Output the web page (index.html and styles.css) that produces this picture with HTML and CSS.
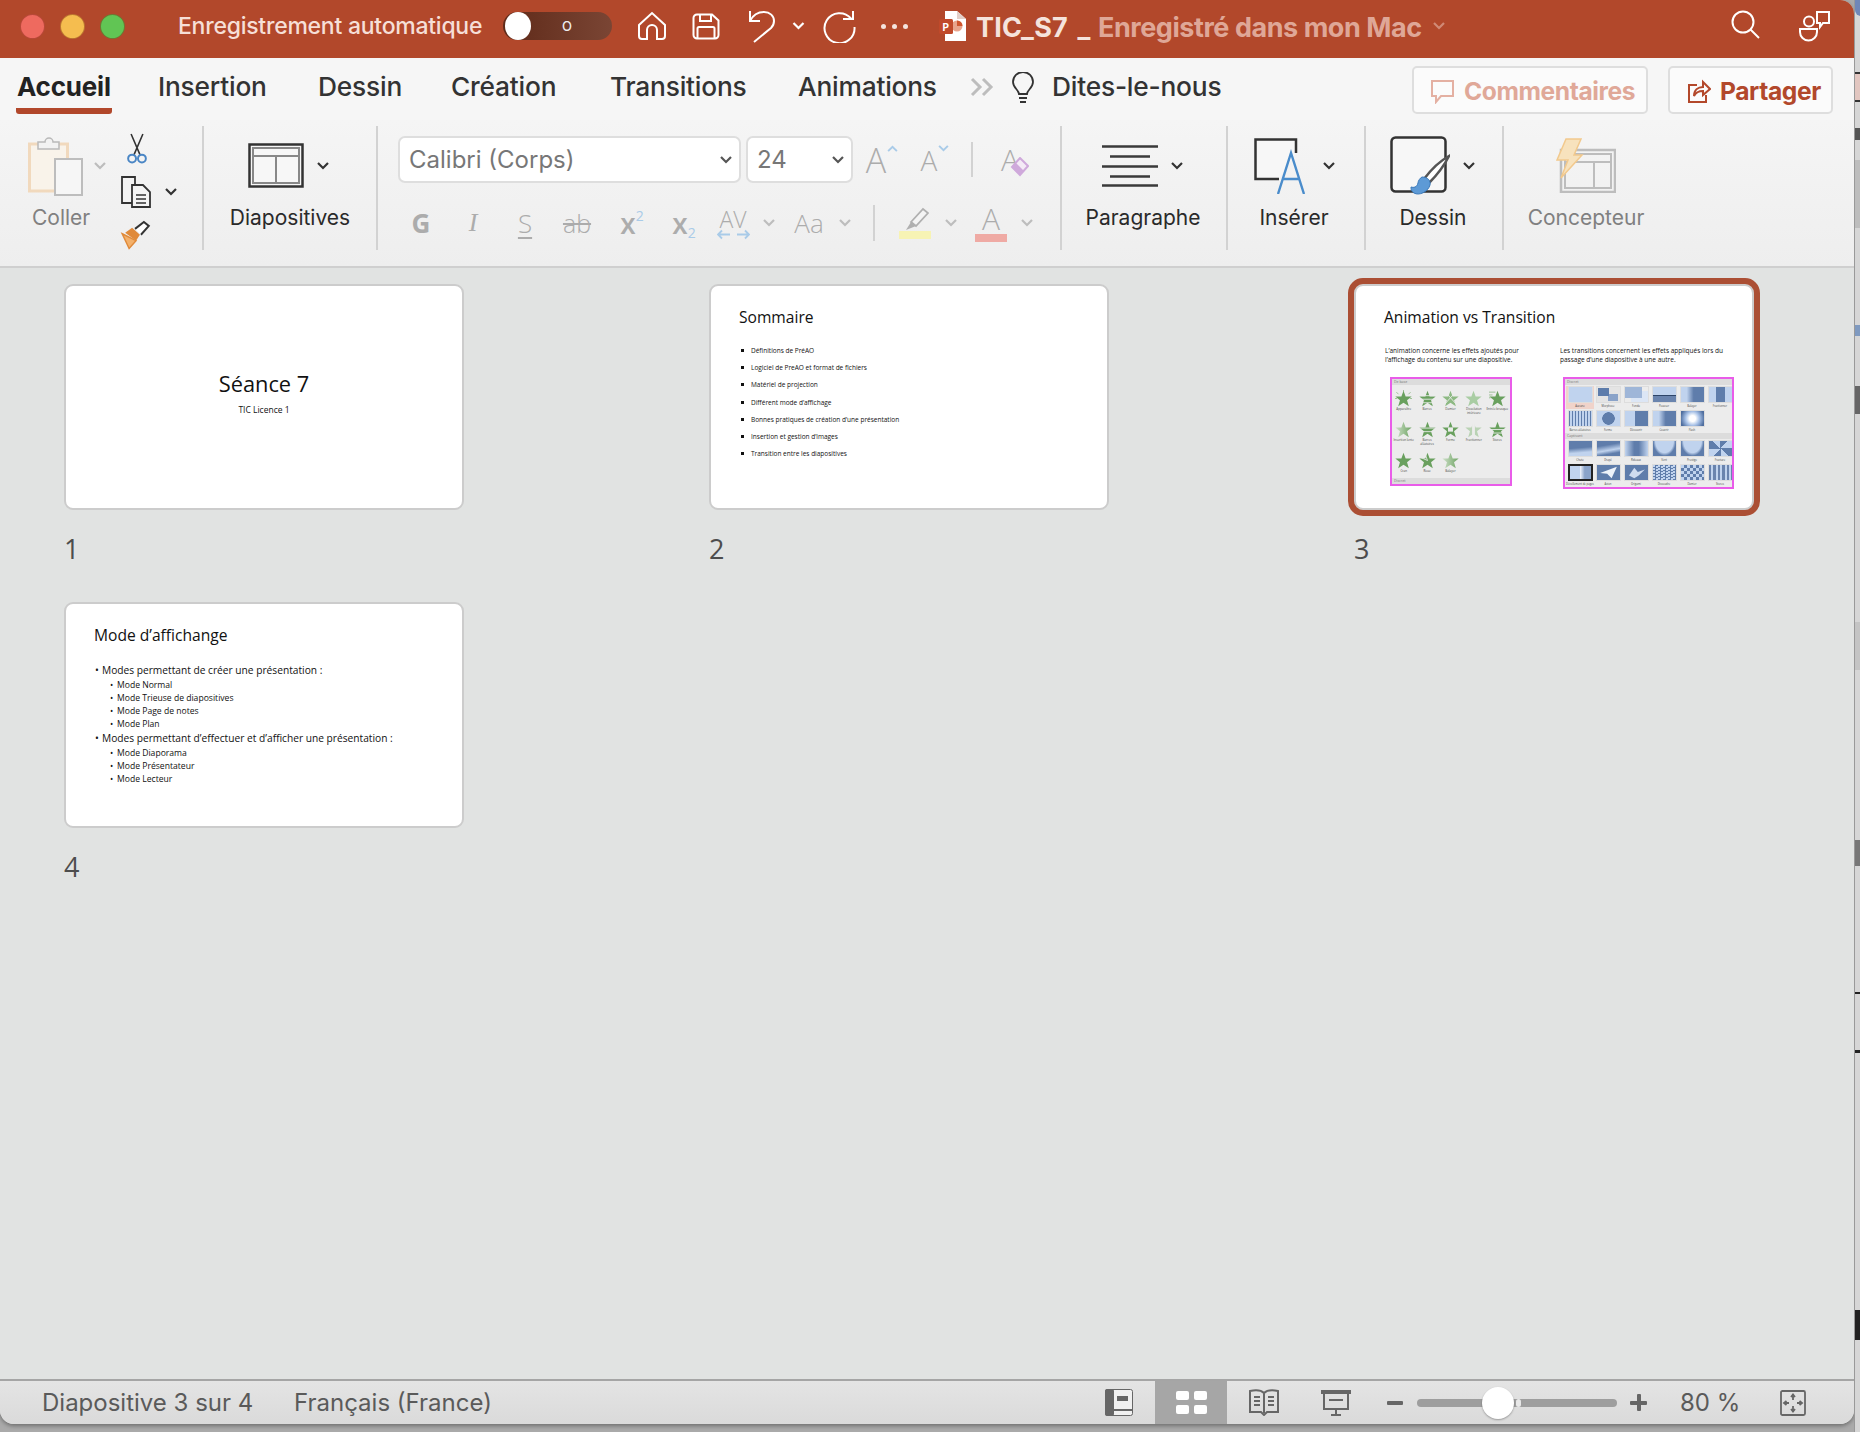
FILE: index.html
```html
<!DOCTYPE html>
<html lang="fr">
<head>
    <meta charset="UTF-8">
    <title>TIC_S7 - PowerPoint</title>
    <link rel="stylesheet" href="styles.css">
</head>
<body>
    <svg class="defs" width="0" height="0">
        <defs>
            <symbol id="star" viewBox="0 0 24 24"><polygon points="12,1 15,9 23.5,9 17,14.5 19.5,23 12,18 4.5,23 7,14.5 0.5,9 9,9"/></symbol>
            <symbol id="chev" viewBox="0 0 12 8"><path d="M1 1l5 5 5-5" fill="none" stroke="currentColor" stroke-width="2.2"/></symbol>
            <linearGradient id="fadeStar" x1="0" x2="1" y1="0" y2="0"><stop offset="0" stop-color="#cfe0ca"/><stop offset="1" stop-color="#6ea463"/></linearGradient>
        </defs>
    </svg>

    <div class="window">
        <!-- barre de titre -->
        <header class="titlebar">
            <span class="light light-red"></span>
            <span class="light light-yellow"></span>
            <span class="light light-green"></span>
            <span class="autosave">Enregistrement automatique</span>
            <span class="switch"><span class="knob"></span><span class="switch-o">O</span></span>

            <svg class="ti ti-home" width="30" height="30" viewBox="0 0 30 30"><path d="M2 14L15 2l13 12v11a3 3 0 0 1-3 3h-5V19a5 5 0 0 0-10 0v9H5a3 3 0 0 1-3-3z"/></svg>
            <svg class="ti ti-save" width="28" height="27" viewBox="0 0 28 27"><path d="M5 1.5h15l6.500 6V22a3.500 3.500 0 0 1-3.500 3.500H5A3.500 3.500 0 0 1 1.500 22V5A3.500 3.500 0 0 1 5 1.500zM8 1.500v6.500h11V1.500M5.500 25.500V15.500a1.500 1.500 0 0 1 1.500-1.500h14a1.500 1.500 0 0 1 1.500 1.500v10"/></svg>
            <svg class="ti ti-undo" width="28" height="33" viewBox="0 0 28 33"><path d="M2 1v10h10M2 11c3-6 8-9 14-9 6 0 10 4 10 9 0 3-1 5-3 7L6 32"/></svg>
            <svg class="ti-chev ti-chev-undo" width="13" height="8"><use href="#chev"/></svg>
            <svg class="ti ti-redo" width="33" height="33" viewBox="0 0 33 33"><path d="M28 8.500A15 15 0 1 0 31.500 17M30 1v8h-10"/></svg>
            <span class="ti-dots"><i></i><i></i><i></i></span>

            <svg class="ppt-icon" width="27" height="30" viewBox="0 0 27 30"><path d="M6 0h12l9 8v22H6z" fill="#fff"/><path d="M18 0l9 8h-9z" fill="#e3cfc8"/><circle cx="18" cy="15" r="5.500" fill="#e8a48c"/><path d="M18 15V9.500a5.500 5.500 0 0 1 5.500 5.500z" fill="#d0562f"/><rect x="0" y="8" width="14" height="15" rx="1.500" fill="#c0492a"/><text x="3.500" y="19.500" class="ppt-p">P</text></svg>
            <span class="doc-name">TIC_S7 _</span>
            <span class="doc-state">Enregistré dans mon Mac</span>
            <svg class="doc-chev" width="14" height="8"><use href="#chev"/></svg>

            <span class="titlebar-right">
                <svg class="ti" width="29" height="29" viewBox="0 0 29 29"><circle cx="12" cy="12" r="10.500"/><path d="M19.500 19.500L28 28"/></svg>
                <svg class="ti ti-people" width="33" height="32" viewBox="0 0 33 32"><circle cx="11" cy="11.500" r="5"/><path d="M2 19h17v3a8.500 8.500 0 0 1-17 0z"/><path d="M19 2h12v11h-6l-3 4v-4h-3z"/></svg>
            </span>
        </header>

        <!-- onglets -->
        <nav class="tabs">
            <div class="tab active"><span>Accueil</span></div>
            <div class="tab"><span>Insertion</span></div>
            <div class="tab"><span>Dessin</span></div>
            <div class="tab"><span>Création</span></div>
            <div class="tab"><span>Transitions</span></div>
            <div class="tab"><span>Animations</span></div>
            <div class="tab-more tab-chevrons">
                <svg width="25" height="20" viewBox="0 0 25 20"><path d="M2 2l8 8-8 8M13 2l8 8-8 8" fill="none" stroke="#bdbdbd" stroke-width="3"/></svg>
            </div>
            <div class="tab-more">
                <svg width="24" height="31" viewBox="0 0 24 31" fill="none" stroke="#333" stroke-width="1.800"><path d="M8 22c0-4-6-6-6-12a10 10 0 0 1 20 0c0 6-6 8-6 12z"/><path d="M8 26h8M9 30h6"/></svg>
            </div>
            <div class="tab"><span>Dites-le-nous</span></div>
            <div class="actions">
                <button class="act act-comment">
                    <svg width="25" height="25" viewBox="0 0 25 25" fill="none" stroke="#e4b0a2" stroke-width="2"><path d="M2 2h21v15H11l-5 6v-6H2z"/></svg>
                    Commentaires
                </button>
                <button class="act act-share">
                    <svg width="24" height="25" viewBox="0 0 24 25" fill="none" stroke="#b3482b" stroke-width="2"><path d="M10 6H2v17h17v-7"/><path d="M7 17c0-6 4-9 9-9V3l7 7-7 6v-4c-4 0-7 1-9 5z"/></svg>
                    Partager
                </button>
            </div>
        </nav>

        <!-- ruban -->
        <section class="ribbon">
            <div class="group group-coller">
                <div class="coller-main">
                    <div class="coller-top">
                        <svg width="56" height="62" viewBox="0 0 56 62"><rect x="1.500" y="9" width="38" height="47" fill="#f9f3ea" stroke="#f1d9bd" stroke-width="3"/><path d="M10 14V7h7a4 4 0 0 1 8 0h6v7z" fill="#f2f2f2" stroke="#b9b9b9" stroke-width="1.500"/><rect x="27" y="24" width="27" height="36" fill="#f6f6f6" stroke="#bdbdbd" stroke-width="2"/></svg>
                        <svg class="chev-light" width="12" height="8"><use href="#chev"/></svg>
                    </div>
                    <div class="glabel muted">Coller</div>
                </div>
                <div class="coller-side">
                    <svg width="22" height="32" viewBox="0 0 22 32" fill="none"><path d="M5 1l9 21M17 1L8 22" stroke="#333" stroke-width="1.600"/><circle cx="6" cy="26" r="4" stroke="#4a86c5" stroke-width="2"/><circle cx="16" cy="26" r="4" stroke="#4a86c5" stroke-width="2"/></svg>
                    <div class="copy-row">
                        <svg width="32" height="32" viewBox="0 0 32 32" fill="#f4f4f4" stroke="#333" stroke-width="1.800"><path d="M12 27H2V1h13v8"/><path d="M12 9h11l7 7v15H12z"/><path d="M16 19h10M16 23h10M16 27h10" stroke-width="1.300"/></svg>
                        <svg class="chev-dark" width="12" height="8"><use href="#chev"/></svg>
                    </div>
                    <svg width="33" height="30" viewBox="0 0 33 30"><path d="M2 14l14 7-7 8z" fill="#f3b06a" stroke="#e08a3a" stroke-width="1.500"/><path d="M5 13l7-5 8 7-4 6z" fill="#e08a3a"/><path d="M15 9l9-7 5 4-8 9" fill="#fff" stroke="#333" stroke-width="2"/></svg>
                </div>
            </div>

            <div class="group big">
                <div class="big-top">
                    <svg width="56" height="45" viewBox="0 0 56 45" fill="#f7f7f7"><rect x="1.500" y="1.500" width="53" height="42" stroke="#333" stroke-width="2.500"/><rect x="5" y="5" width="46" height="35" stroke="#888" stroke-width="2"/><path d="M5 13h46M28 13v27" stroke="#888" stroke-width="2"/></svg>
                    <svg class="chev-dark" width="12" height="8"><use href="#chev"/></svg>
                </div>
                <div class="glabel">Diapositives</div>
            </div>

            <div class="group group-font">
                <div class="font-row1">
                    <div class="select"><span>Calibri (Corps)</span><svg width="12" height="8"><use href="#chev"/></svg></div>
                    <div class="select"><span>24</span><svg width="12" height="8"><use href="#chev"/></svg></div>
                    <div class="fcell fa-big">A<svg class="fa-hat" width="11" height="7"><use href="#chev" transform="rotate(180 5.500 3.500)"/></svg></div>
                    <div class="fcell fa-small">A<svg class="fa-hat" width="11" height="7"><use href="#chev"/></svg></div>
                    <div class="fcell"><i class="vsep"></i></div>
                    <div class="fcell fa-clear">A
                        <svg width="20" height="20" viewBox="0 0 20 20"><path d="M11 1l8 8-8 9-8-8z" fill="#f4eaf6" stroke="#cfa9db" stroke-width="2"/><path d="M7 6l8 8-4 4-8-8z" fill="#cfa9db"/></svg>
                    </div>
                </div>
                <div class="font-row2">
                    <div class="fcell f-g">G</div>
                    <div class="fcell f-i">I</div>
                    <div class="fcell f-s">S</div>
                    <div class="fcell f-ab">ab</div>
                    <div class="fcell f-x">x<sup>2</sup></div>
                    <div class="fcell f-x">x<sub>2</sub></div>
                    <div class="fcell f-av">AV
                        <svg width="33" height="11" viewBox="0 0 33 11" fill="none" stroke="#a9cbe8" stroke-width="1.800"><path d="M1 5.500h12M5 1.500l-4 4 4 4M20 5.500h12M28 1.500l4 4-4 4"/></svg>
                    </div>
                    <div class="fcell"><svg class="chev-light" width="12" height="8"><use href="#chev"/></svg></div>
                    <div class="fcell f-aa">Aa</div>
                    <div class="fcell"><svg class="chev-light" width="12" height="8"><use href="#chev"/></svg></div>
                    <div class="fcell"><i class="vsep vsep-tall"></i></div>
                    <div class="fcell f-mark">
                        <svg width="28" height="24" viewBox="0 0 28 24"><path d="M10 15L22 2l5 4-12 13z" fill="#f4f4f4" stroke="#b0b0b0" stroke-width="1.800"/><path d="M5 23l5-8 5 4z" fill="#b0b0b0"/></svg>
                        <i class="swatch swatch-yellow"></i>
                    </div>
                    <div class="fcell"><svg class="chev-light" width="12" height="8"><use href="#chev"/></svg></div>
                    <div class="fcell f-mark f-color">A<i class="swatch swatch-red"></i></div>
                    <div class="fcell"><svg class="chev-light" width="12" height="8"><use href="#chev"/></svg></div>
                </div>
            </div>

            <div class="group big group-para">
                <div class="big-top">
                    <svg width="56" height="42" viewBox="0 0 56 42" stroke="#3a3a3a" stroke-width="2.400"><path d="M0 1.500h56M8 11.500h40M0 21.500h56M8 31.500h40M0 40.500h56"/></svg>
                    <svg class="chev-dark" width="12" height="8"><use href="#chev"/></svg>
                </div>
                <div class="glabel">Paragraphe</div>
            </div>

            <div class="group big group-ins">
                <div class="big-top">
                    <svg width="56" height="56" viewBox="0 0 56 56" fill="none"><path d="M25 41H1.500V1.500H42V15" fill="#f7f7f7" stroke="#333" stroke-width="2.500"/><path d="M24 56L37 15l13 41M29 41h17" stroke="#4a8ccb" stroke-width="2.400" fill="none"/></svg>
                    <svg class="chev-dark" width="12" height="8"><use href="#chev"/></svg>
                </div>
                <div class="glabel">Insérer</div>
            </div>

            <div class="group big group-draw">
                <div class="big-top">
                    <svg width="60" height="60" viewBox="0 0 60 60"><rect x="1.500" y="1.500" width="54" height="54" rx="4" fill="#f7f7f7" stroke="#333" stroke-width="2.500"/><path d="M59 20C54 30 46 40 39 47l-5-4C40 35 50 25 59 20z" fill="#fff" stroke="#555" stroke-width="2.500"/><path d="M32 41c6 0 9 4 8 8-2 7-11 11-16 8-3-2-3-4-3-6 3 1 6 0 7-4 0-2 2-5 4-6z" fill="#5d9ad6" stroke="#3a78b8"/></svg>
                    <svg class="chev-dark" width="12" height="8"><use href="#chev"/></svg>
                </div>
                <div class="glabel">Dessin</div>
            </div>

            <div class="group big group-design">
                <div class="big-top">
                    <svg width="60" height="55" viewBox="0 0 60 55" fill="none"><rect x="5" y="12" width="54" height="42" stroke="#bdbdbd" stroke-width="2.500"/><rect x="9" y="16" width="46" height="34" stroke="#bdbdbd" stroke-width="2"/><path d="M9 24h46M38 24v26" stroke="#bdbdbd" stroke-width="2"/><path d="M10 1h15l-7 16h8L5 40l7-18H1z" fill="#f7e2bd" stroke="#f2c98d" stroke-width="1.500"/></svg>
                </div>
                <div class="glabel muted">Concepteur</div>
            </div>
        </section>

        <!-- trieuse de diapositives -->
        <main class="sorter">
            <div class="slide-item">
                <div class="slide slide-title">
                    <div class="s1-title">Séance 7</div>
                    <div class="s1-sub">TIC Licence 1</div>
                </div>
                <div class="slide-num">1</div>
            </div>

            <div class="slide-item">
                <div class="slide slide-list">
                    <div class="s-title">Sommaire</div>
                    <ul class="s2-list">
                        <li>Définitions de PréAO</li>
                        <li>Logiciel de PreAO et format de fichiers</li>
                        <li>Matériel de projection</li>
                        <li>Différent mode d’affichage</li>
                        <li>Bonnes pratiques de création d’une présentation</li>
                        <li>Insertion et gestion d’images</li>
                        <li>Transition entre les diapositives</li>
                    </ul>
                </div>
                <div class="slide-num">2</div>
            </div>

            <div class="slide-item">
                <div class="slide slide-list selected">
                    <div class="s-title">Animation vs Transition</div>
                    <div class="s3-cols">
                        <div class="s3-col">
                            <p class="s3-text s3-text-left">L’animation concerne les effets ajoutés pour l’affichage du contenu sur une diapositive.</p>
                            <div class="shot shot-anim">
                                <div class="shot-band">De base</div>
                                <div class="anim-grid">
                                    <div class="anim"><svg class="star" viewBox="0 0 24 24"><use href="#star" width="24" height="24"/><path class="star-rays" d="M12 0v3M2 3l3 3M22 3l-3 3M0 12h3M24 12h-3"/></svg>Apparaître</div>
                                    <div class="anim"><svg class="star" viewBox="0 0 24 24"><use href="#star" width="24" height="24"/><path class="star-cut" d="M0 8h24M0 13h24M0 18h24"/></svg>Barres</div>
                                    <div class="anim"><svg class="star star-check" viewBox="0 0 24 24"><use href="#star" width="24" height="24"/><path class="star-cut" d="M6 4l14 16M18 4L4 20"/></svg>Damier</div>
                                    <div class="anim"><svg class="star star-pale" viewBox="0 0 24 24"><use href="#star" width="24" height="24"/></svg>Dissolution intérieure</div>
                                    <div class="anim"><svg class="star" viewBox="0 0 24 24"><use href="#star" width="24" height="24"/><path class="star-trail" d="M0 3h9M0 7h5M0 11h2"/></svg>Entrée brusque</div>
                                    <div class="anim"><svg class="star star-fade" viewBox="0 0 24 24"><use href="#star" width="24" height="24"/></svg>Insertion lente</div>
                                    <div class="anim"><svg class="star" viewBox="0 0 24 24"><use href="#star" width="24" height="24"/><path class="star-cut" d="M0 10h24M0 15h24"/></svg>Barres aléatoires</div>
                                    <div class="anim"><svg class="star" viewBox="0 0 24 24"><use href="#star" width="24" height="24"/><rect x="8.500" y="9" width="7" height="6" fill="#ececec"/></svg>Forme</div>
                                    <div class="anim"><svg class="star star-split" viewBox="0 0 24 24"><use href="#star" width="24" height="24"/><rect x="10" y="0" width="4" height="24" fill="#ececec"/></svg>Fractionner</div>
                                    <div class="anim"><svg class="star" viewBox="0 0 24 24"><use href="#star" width="24" height="24"/><path class="star-cut" d="M0 12h24M0 17h24"/></svg>Stores</div>
                                    <div class="anim"><svg class="star" viewBox="0 0 24 24"><use href="#star" width="24" height="24"/></svg>Cran</div>
                                    <div class="anim"><svg class="star" viewBox="0 0 24 24"><use href="#star" width="24" height="24"/><path class="star-cut" d="M12 12L8 1M12 12L3 8"/></svg>Roue</div>
                                    <div class="anim"><svg class="star star-fade" viewBox="0 0 24 24"><use href="#star" width="24" height="24"/></svg>Balayer</div>
                                </div>
                                <div class="shot-band shot-band-end">Discret</div>
                            </div>
                        </div>
                        <div class="s3-col">
                            <p class="s3-text">Les transitions concernent les effets appliqués lors du passage d’une diapositive à une autre.</p>
                            <div class="shot shot-trans">
                                <div class="shot-band">Discret</div>
                                <div class="trans-grid">
                                    <div class="trans chosen"><i class="tile"></i>Aucune</div>
                                    <div class="trans"><i class="tile t-morph"></i>Morphose</div>
                                    <div class="trans"><i class="tile t-fade"></i>Fondu</div>
                                    <div class="trans"><i class="tile t-push"></i>Pousser</div>
                                    <div class="trans"><i class="tile t-wipe"></i>Balayer</div>
                                    <div class="trans"><i class="tile t-split"></i>Fractionner</div>
                                    <div class="trans"><i class="tile t-stripes"></i>Barres aléatoires</div>
                                    <div class="trans"><i class="tile t-circle"></i>Forme</div>
                                    <div class="trans"><i class="tile t-reveal"></i>Découvrir</div>
                                    <div class="trans"><i class="tile t-wipe"></i>Couvrir</div>
                                    <div class="trans"><i class="tile t-flash"></i>Flash</div>
                                </div>
                                <div class="shot-band shot-band-mid">Captivant</div>
                                <div class="trans-grid">
                                    <div class="trans"><i class="tile t-fall"></i>Chute</div>
                                    <div class="trans"><i class="tile t-drape"></i>Drapé</div>
                                    <div class="trans"><i class="tile t-curtain"></i>Rideaux</div>
                                    <div class="trans"><i class="tile t-wind"></i>Vent</div>
                                    <div class="trans"><i class="tile t-wind"></i>Prestige</div>
                                    <div class="trans"><i class="tile t-shatter"></i>Fracture</div>
                                    <div class="trans"><i class="tile t-page"></i>Décollement de pages</div>
                                    <div class="trans"><i class="tile t-dark"><svg viewBox="0 0 25 17"><polygon points="3,9 22,2 16,15 11,10" fill="#eef3fa"/></svg></i>Avion</div>
                                    <div class="trans"><i class="tile t-dark"><svg viewBox="0 0 25 17"><polygon points="4,12 10,3 14,8 22,5 15,12 10,15" fill="#cfdcf0"/></svg></i>Origami</div>
                                    <div class="trans"><i class="tile t-dots"></i>Dissoudre</div>
                                    <div class="trans"><i class="tile t-checker"></i>Damier</div>
                                    <div class="trans"><i class="tile t-stripes2"></i>Stores</div>
                                </div>
                            </div>
                        </div>
                    </div>
                </div>
                <div class="slide-num">3</div>
            </div>

            <div class="slide-item">
                <div class="slide slide-list">
                    <div class="s-title">Mode d’affichange</div>
                    <ul class="s4-list">
                        <li class="lvl1">Modes permettant de créer une présentation :</li>
                        <li>Mode Normal</li>
                        <li>Mode Trieuse de diapositives</li>
                        <li>Mode Page de notes</li>
                        <li>Mode Plan</li>
                        <li class="lvl1">Modes permettant d’effectuer et d’afficher une présentation :</li>
                        <li>Mode Diaporama</li>
                        <li>Mode Présentateur</li>
                        <li>Mode Lecteur</li>
                    </ul>
                </div>
                <div class="slide-num">4</div>
            </div>
        </main>

        <!-- barre d'etat -->
        <footer class="statusbar">
            <span class="st-slide">Diapositive 3 sur 4</span>
            <span class="st-lang">Français (France)</span>
            <div class="st-right">
                <svg class="sv sv-normal" width="28" height="27" viewBox="0 0 28 27"><rect x="0.500" y="0.500" width="27" height="26" rx="2" fill="#f0f0f0" stroke="#666"/><rect x="0" y="0" width="9" height="27" rx="2" fill="#666"/><rect x="0" y="20" width="28" height="2" fill="#666"/><rect x="12" y="7" width="11" height="5" fill="#666"/></svg>
                <div class="sv-active"><i></i><i></i><i></i><i></i></div>
                <svg class="sv sv-read" width="30" height="27" viewBox="0 0 30 27" fill="none" stroke="#666" stroke-width="2"><path d="M15 4C12 1 6 1 1 2v21h11l3 3 3-3h11V2c-5-1-11-1-14 2zM15 4v20"/><path d="M5 8h6M5 12h6M5 16h6M19 8h6M19 12h6M19 16h6"/></svg>
                <svg class="sv sv-show" width="30" height="26" viewBox="0 0 30 26" fill="none" stroke="#666" stroke-width="2"><path d="M0 2h30" stroke-width="4"/><path d="M3 3v16h24V3M8 10h14M15 19v6M10 25h10"/></svg>
                <span class="zoom-minus"></span>
                <div class="slider"><span class="slider-knob"></span><span class="slider-tick"></span></div>
                <span class="zoom-plus"></span>
                <span class="zoom-val">80 %</span>
                <svg class="sv sv-fit" width="26" height="26" viewBox="0 0 26 26" fill="none" stroke="#666" stroke-width="1.800"><rect x="1" y="1" width="24" height="24" rx="1.500"/><path d="M13 5v5M11 7l2-2.500L15 7M13 21v-5M11 19l2 2.500 2-2.500M4 13h5M6.500 11L4 13l2.500 2M22 13h-5M19.500 11L22 13l-2.500 2"/></svg>
            </div>
        </footer>
    </div>

    <!-- ce qui depasse derriere la fenetre -->
    <div class="backdrop">
        <i class="bd bd-blue"></i><i class="bd bd-line1"></i><i class="bd bd-line2"></i>
        <i class="bd bd-red"></i><i class="bd bd-e"></i><i class="bd bd-band"></i><i class="bd bd-blue2"></i>
        <i class="bd bd-s"></i><i class="bd bd-band2"></i><i class="bd bd-n"></i>
        <i class="bd bd-k1"></i><i class="bd bd-k2"></i><i class="bd bd-f"></i>
    </div>
</body>
</html>
```

FILE: styles.css
```css
* {
    box-sizing: border-box;
}

html, body {
    margin: 0;
    padding: 0;
}

body {
    width: 1860px;
    height: 1432px;
    overflow: hidden;
    display: flex;
    background-color: #aaa;
    font-family: Inter, "Liberation Sans", sans-serif;
    color: #222;
}

.defs {
    position: absolute;
}

.window {
    width: 1854px;
    height: 1424px;
    display: flex;
    flex-direction: column;
    background-color: #e1e3e2;
    border-radius: 0 14px 14px 14px;
    overflow: hidden;
    box-shadow: 0 2px 4px rgba(0, 0, 0, 0.35);
}

/* title bar */
.titlebar {
    height: 58px;
    flex: none;
    display: flex;
    align-items: center;
    background-color: #b2482b;
    color: #fff;
    padding-left: 20px;
}

.light {
    width: 25px;
    height: 25px;
    border-radius: 50%;
    margin-right: 15px;
    margin-top: -6px;
    border: 1px solid rgba(120, 30, 10, 0.45);
}

.light-red { background-color: #ee6a5f; }
.light-yellow { background-color: #f5bd4f; }
.light-green { background-color: #61c554; }

.autosave {
    width: 305px;
    margin-left: 38px;
    margin-top: -6px;
    font-size: 23px;
    font-weight: 500;
    letter-spacing: -0.25px;
    white-space: nowrap;
    color: #f6dfd7;
}

.switch {
    width: 109px;
    height: 28px;
    margin-left: 20px;
    margin-top: -6px;
    border-radius: 14px;
    background: linear-gradient(90deg, #5f2a19, #7a4534);
    display: flex;
    align-items: center;
    position: relative;
}

.knob {
    width: 26px;
    height: 28px;
    margin-left: 2px;
    border-radius: 50%;
    background-color: #fff;
}

.switch-o {
    margin-left: 31px;
    font-size: 13px;
    font-weight: 500;
    color: #eee;
}

.ti {
    flex: none;
    margin-top: -6px;
    fill: none;
    stroke: #fff;
    stroke-width: 2;
}

.ti-home { margin-left: 25px; }
.ti-save { margin-left: 25px; }
.ti-undo { margin-left: 28px; }
.ti-redo { margin-left: 18px; }

.ti-chev {
    margin-top: -6px;
    color: #fff;
}

.ti-chev-undo { margin-left: 16px; }

.ti-dots {
    display: flex;
    gap: 6px;
    margin-left: 25px;
    margin-top: -6px;
}

.ti-dots i {
    width: 5px;
    height: 5px;
    border-radius: 50%;
    background-color: #f4e3dd;
}

.ppt-icon {
    margin-left: 31px;
    margin-top: -6px;
}

.ppt-p {
    font-size: 10px;
    font-weight: 700;
    fill: #fff;
}

.doc-name,
.doc-state {
    font-size: 27px;
    font-weight: 700;
    white-space: pre;
    margin-top: -4px;
}

.doc-name {
    width: 122px;
    margin-left: 10px;
    letter-spacing: 0.2px;
    word-spacing: 3px;
    color: #f5e3dc;
}

.doc-state {
    width: 325px;
    letter-spacing: -0.45px;
    color: #dfa797;
}

.doc-chev {
    margin-left: 9px;
    margin-top: -6px;
    color: #d08a76;
}

.titlebar-right {
    margin-left: auto;
    padding-right: 23px;
    display: flex;
    gap: 38px;
}

/* tabs */
.tabs {
    height: 62px;
    flex: none;
    display: grid;
    grid-template-columns: 141px 160px 133px 159px 188px 172px 41px 41px 190px 1fr;
    padding-left: 17px;
    background-color: #f6f6f6;
}

.tab {
    padding-top: 12px;
    font-size: 26.300px;
    line-height: 34px;
    letter-spacing: -0.2px;
    white-space: nowrap;
    color: #333;
    font-weight: 500;
}

.tab span {
    display: inline-block;
}

.tab.active {
    font-size: 26px;
    font-weight: 700;
    color: #222;
}

.tab.active span {
    padding: 0 1px 4px;
    margin-left: -1px;
    border-bottom: 6px solid #b2482b;
    border-radius: 0 0 3px 3px;
}

.tab-more {
    padding-top: 14px;
}

.tab-chevrons {
    padding-top: 19px;
}

.actions {
    display: flex;
    justify-content: flex-end;
    gap: 20px;
    padding: 8px 21px 0 0;
}

.act {
    height: 48px;
    display: flex;
    align-items: center;
    gap: 9px;
    border: 2px solid #dedede;
    border-radius: 5px;
    background-color: #fbfbfb;
    font-family: inherit;
    font-size: 24.600px;
    font-weight: 700;
    letter-spacing: -0.4px;
    white-space: nowrap;
}

.act-comment {
    width: 236px;
    padding: 2px 0 0 16px;
    color: #e0a898;
}

.act-share {
    width: 165px;
    padding: 2px 0 0 17px;
    color: #b2482b;
}

/* ribbon */
.ribbon {
    height: 148px;
    flex: none;
    display: flex;
    padding-top: 6px;
    background: linear-gradient(#f5f5f5, #eeeeee);
    border-bottom: 2px solid #cfcfcf;
}

.group {
    height: 124px;
    border-right: 2px solid #d2d2d2;
}

.glabel {
    height: 26px;
    font-size: 21px;
    line-height: 26px;
    text-align: center;
    white-space: nowrap;
    color: #2a2a2a;
}

.muted {
    color: #808080;
}

.big {
    display: flex;
    flex-direction: column;
    align-items: center;
}

.big:nth-child(2) { width: 174px; }
.group-para { width: 166px; }
.group-ins { width: 138px; }
.group-draw { width: 138px; }
.group-design { width: 164px; border-right: none; }

.group-para .glabel,
.group-draw .glabel {
    margin-right: 2px;
}

.group-ins .glabel {
    margin-right: 4px;
}

.big-top {
    height: 79px;
    display: flex;
    align-items: center;
    gap: 13px;
    padding-right: 4px;
}

.group-design .big-top {
    padding-right: 0;
}

.chev-dark { color: #333; }
.chev-light { color: #bdbdbd; }

.group-coller {
    width: 204px;
    display: flex;
}

.coller-main {
    width: 118px;
    padding-left: 28px;
}

.coller-top {
    height: 79px;
    display: flex;
    align-items: center;
    gap: 10px;
}

.coller-main .glabel {
    width: 66px;
    text-align: left;
    margin-left: 4px;
}

.coller-side {
    margin-left: 2px;
    padding-top: 7px;
    display: flex;
    flex-direction: column;
    gap: 12px;
}

.coller-side > svg:first-child {
    margin-left: 6px;
}

.copy-row {
    display: flex;
    align-items: center;
    gap: 13px;
    margin-top: 0;
}

.group-font {
    width: 684px;
    padding-top: 10px;
}

.font-row1 {
    height: 47px;
    display: grid;
    grid-template-columns: 343px 112px 58px 48px 25px 52px;
    column-gap: 0;
    margin-left: 20px;
}

.font-row2 {
    height: 40px;
    margin-top: 20px;
    margin-left: 17px;
    display: grid;
    grid-template-columns: 52px 52px 52px 52px 58px 46px 52px 20px 60px 12px 46px 36px 36px 44px 28px;
}

.select {
    display: flex;
    align-items: center;
    justify-content: space-between;
    padding: 0 7px 0 9px;
    background-color: #fff;
    border: 2px solid #dedede;
    border-radius: 7px;
    font-size: 24px;
    color: #777;
}

.select + .select {
    margin-left: 5px;
}

.select svg {
    color: #555;
}

.fcell {
    display: flex;
    align-items: center;
    justify-content: center;
    position: relative;
    color: #acacac;
    font-family: "Open Sans", sans-serif;
}

.fa-big { font-size: 34px; font-weight: 300; }
.fa-small { font-size: 28px; font-weight: 300; }
.fa-clear { font-size: 30px; font-weight: 300; }

.fa-hat {
    align-self: flex-start;
    margin: 9px 0 0 1px;
    color: #a9cbe8;
}

.fa-clear svg {
    position: absolute;
    left: 25px;
    top: 21px;
}

.vsep {
    display: block;
    width: 2px;
    height: 35px;
    background-color: #d2d2d2;
}

.vsep-tall {
    height: 36px;
}

.f-g { font-size: 26px; font-weight: 700; }
.f-i { font-size: 26px; font-style: italic; font-family: "Liberation Serif", serif; }
.f-s { font-size: 26px; text-decoration: underline; text-underline-offset: 4px; font-weight: 300; }
.f-ab { font-size: 25px; text-decoration: line-through; font-weight: 300; }
.f-x { font-size: 28px; font-weight: 600; }
.f-aa { font-size: 26px; font-weight: 300; }

.f-x sup,
.f-x sub {
    font-size: 14px;
    color: #a9cbe8;
    font-weight: 400;
}

.f-x sup { margin-bottom: 16px; }
.f-x sub { margin-top: 18px; }

.f-av {
    flex-direction: column;
    font-size: 23px;
    font-weight: 300;
    line-height: 24px;
}

.f-av svg {
    margin-top: -2px;
}

.f-mark {
    flex-direction: column;
}

.f-color {
    font-size: 30px;
    font-weight: 300;
    line-height: 30px;
}

.swatch {
    display: block;
    width: 32px;
    height: 8px;
}

.swatch-yellow { background-color: #f7f3b4; }
.swatch-red { background-color: #efaaa4; }

/* slides */
.sorter {
    flex: 1;
    display: grid;
    grid-template-columns: repeat(3, 400px);
    column-gap: 245px;
    row-gap: 39px;
    align-content: start;
    padding: 16px 0 0 64px;
    font-family: "Open Sans", sans-serif;
}

.slide-item {
    height: 279px;
}

.slide {
    width: 400px;
    height: 226px;
    background-color: #fff;
    border: 2px solid #ccc;
    border-radius: 9px;
    color: #111;
    overflow: hidden;
}

.slide.selected {
    outline: 6px solid #ab4f34;
    overflow: visible;
}

.slide-num {
    margin-top: 24px;
    font-size: 27px;
    line-height: 30px;
    color: #4d4d4d;
}

.slide-title {
    display: flex;
    flex-direction: column;
    align-items: center;
    padding-top: 82px;
}

.s1-title {
    font-size: 21.800px;
    line-height: 32px;
}

.s1-sub {
    font-size: 8.500px;
    line-height: 14px;
    margin-top: 3px;
}

.slide-list {
    padding: 20px 0 0 28px;
}

.s-title {
    font-size: 15.600px;
    line-height: 22px;
}

.s2-list,
.s4-list {
    list-style: none;
    margin: 0;
    padding: 0;
}

.s2-list {
    margin-top: 14px;
}

.s2-list li {
    display: flex;
    height: 17.200px;
    align-items: center;
    font-size: 6.500px;
}

.s2-list li::before {
    content: "";
    width: 3px;
    height: 3px;
    margin-left: 2px;
    margin-right: 7px;
    background-color: #111;
}

.s4-list {
    margin-top: 16px;
}

.s4-list li {
    display: flex;
    align-items: center;
    height: 13.100px;
    padding-left: 16px;
    font-size: 8.600px;
}

.s4-list li::before {
    content: "•";
    width: 7px;
}

.s4-list li.lvl1 {
    height: 16px;
    padding-left: 1px;
    font-size: 10.200px;
}

.s4-list li.lvl1::before {
    width: 7px;
}

.s3-cols {
    display: flex;
    margin-top: 18px;
    margin-left: 1px;
}

.s3-col {
    width: 175px;
}

.s3-text {
    margin: 0;
    width: 168px;
    font-size: 6.500px;
    line-height: 9px;
    height: 31px;
}

.s3-text-left {
    width: 142px;
}

.shot {
    border: 2px solid #e95ce9;
    background-color: #ececec;
    font-size: 3px;
    color: #444;
    overflow: hidden;
}

.shot-anim {
    width: 122px;
    height: 109px;
    margin-left: 5px;
    display: flex;
    flex-direction: column;
}

.shot-trans {
    width: 171px;
    height: 112px;
    margin-left: 3px;
}

.shot-band {
    height: 6px;
    flex: none;
    line-height: 6px;
    padding-left: 2px;
    background-color: #dcdcdc;
    color: #777;
    font-size: 3.500px;
}

.shot-band-end {
    margin-top: auto;
}

.anim-grid {
    display: grid;
    grid-template-columns: repeat(5, 23.400px);
    grid-template-rows: 31px 31px 24px;
    padding-top: 5px;
}

.anim {
    display: flex;
    flex-direction: column;
    align-items: center;
    text-align: center;
    line-height: 3.500px;
}

.star {
    width: 17px;
    height: 17px;
    fill: #69a05e;
    margin-bottom: 1px;
    flex: none;
}

.star-pale { fill: #a9cda3; }
.star-fade { fill: url(#fadeStar); }
.star-check { fill: #8db983; }
.star-split { fill: #b9d2b4; }

.star-cut {
    fill: none;
    stroke: #ececec;
    stroke-width: 1.200;
}

.star-rays,
.star-trail {
    fill: none;
    stroke: #7faf75;
    stroke-width: 1;
}

.trans-grid {
    display: grid;
    grid-template-columns: repeat(6, 28px);
    padding: 1px 0 0 1px;
    row-gap: 1.500px;
}

.trans {
    display: flex;
    flex-direction: column;
    align-items: center;
    line-height: 4px;
    white-space: nowrap;
    height: 22.500px;
    font-size: 2.700px;
}

.chosen {
    background-color: #f0d3ca;
}

.tile {
    display: block;
    width: 25px;
    height: 17px;
    flex: none;
    margin-bottom: 1px;
    background-color: #c0d3ee;
    border: 1px solid #ddd;
}

.tile svg {
    display: block;
    width: 100%;
    height: 100%;
}

.t-dark { background-color: #5f7dab; }
.t-morph { background: linear-gradient(#5d7cab, #5d7cab) 1px 1px / 11px 8px no-repeat, linear-gradient(#8aa3c9, #8aa3c9) 11px 7px / 10px 7px no-repeat, #e4e4e4; }
.t-fade { background: linear-gradient(#9fb6d8, #9fb6d8) 0 0 / 17px 11px no-repeat, linear-gradient(#dce6f5, #dce6f5) 6px 4px / 17px 11px no-repeat, #ececec; }
.t-push { background: linear-gradient(#c0d3ee 55%, #2e4568 55%, #2e4568 62%, #6a84ae 62%); }
.t-wipe { background: linear-gradient(90deg, #c0d3ee 25%, #5f7dab 55%); }
.t-split { background: linear-gradient(90deg, #c0d3ee 30%, #5f7dab 30%, #5f7dab 70%, #c0d3ee 70%); }
.t-stripes { background: repeating-linear-gradient(90deg, #5f7dab 0 1.500px, #c0d3ee 1.500px 3px); }
.t-stripes2 { background: repeating-linear-gradient(90deg, #6a84ae 0 2.500px, #c0d3ee 2.500px 4.500px); }
.t-circle { background: radial-gradient(circle at center, #5f7dab 0 6px, #c0d3ee 6.500px); }
.t-reveal { background: linear-gradient(90deg, #c0d3ee 45%, #5f7dab 45%); }
.t-flash { background: radial-gradient(circle at center, #fff 0 3px, #a6c0e6 7px, #4f6e9f 12px); }
.t-fall { background: linear-gradient(175deg, #5f7dab 45%, #c0d3ee 75%); }
.t-drape { background: linear-gradient(170deg, #5f7dab 30%, #c0d3ee 60%, #5f7dab 80%); }
.t-curtain { background: linear-gradient(90deg, #c0d3ee, #5f7dab 40%, #5f7dab 60%, #c0d3ee); }
.t-wind { background: radial-gradient(ellipse at 50% 0, #c0d3ee 0 55%, #5f7dab 70%); }
.t-shatter { background: conic-gradient(#5f7dab 0 12%, #c0d3ee 12% 25%, #5f7dab 25% 37%, #c0d3ee 37% 50%, #5f7dab 50% 62%, #c0d3ee 62% 75%, #5f7dab 75% 87%, #c0d3ee 87%); }
.t-page { background: linear-gradient(90deg, #c0d3ee 50%, #e8eef8 50%, #8aa3c9 70%); border: 2px solid #222; }
.t-dots { background: conic-gradient(#5f7dab 25%, #c0d3ee 25% 50%, #5f7dab 50% 75%, #c0d3ee 75%) 0 0 / 5px 3px; }
.t-checker { background: conic-gradient(#5f7dab 25%, #c0d3ee 25% 50%, #5f7dab 50% 75%, #c0d3ee 75%) 0 0 / 6px 6px; }

/* status bar */
.statusbar {
    height: 45px;
    flex: none;
    display: flex;
    align-items: center;
    border-top: 2px solid #a5a5a5;
    background: linear-gradient(#e4e4e4, #dadada);
    padding-left: 42px;
    font-size: 24px;
    color: #5a5a5a;
}

.st-slide { width: 252px; }

.st-right {
    margin-left: auto;
    height: 100%;
    display: flex;
    align-items: center;
}

.sv-normal { margin-right: 22px; }

.sv-active {
    width: 72px;
    height: 43px;
    display: grid;
    grid-template-columns: 13px 13px;
    grid-template-rows: 9px 9px;
    gap: 5px;
    justify-content: center;
    align-content: center;
    background-color: #a6a6a6;
}

.sv-active i {
    background-color: #fff;
    border-radius: 2px;
}

.sv-read { margin-left: 22px; }
.sv-show { margin-left: 42px; }

.zoom-minus,
.zoom-plus {
    position: relative;
    display: block;
    height: 4px;
    background-color: #666;
    border-radius: 1px;
}

.zoom-minus {
    width: 16px;
    margin-left: 36px;
}

.zoom-plus {
    width: 17px;
    margin-left: 13px;
}

.zoom-plus::after {
    content: "";
    position: absolute;
    left: 6.500px;
    top: -6.500px;
    width: 4px;
    height: 17px;
    background-color: #666;
    border-radius: 1px;
}

.slider {
    position: relative;
    width: 200px;
    height: 8px;
    margin-left: 14px;
    border-radius: 4px;
    background-color: #9e9e9e;
}

.slider-knob {
    position: absolute;
    left: 65px;
    top: -12px;
    width: 32px;
    height: 32px;
    border-radius: 50%;
    background-color: #fff;
    box-shadow: 0 1px 2px rgba(0, 0, 0, 0.3);
}

.slider-tick {
    position: absolute;
    left: 99px;
    top: 0;
    width: 5px;
    height: 8px;
    border-radius: 3px;
    background-color: #e8e8e8;
}

.zoom-val {
    width: 100px;
    margin-left: 33px;
    font-size: 24px;
    white-space: nowrap;
}

.sv-fit {
    margin-right: 48px;
}

/* what shows behind the window */
.backdrop {
    position: relative;
    width: 6px;
    height: 1432px;
    background-color: #d6d6d6;
    border-left: 1px solid #999;
}

.bd {
    position: absolute;
    left: 0;
    width: 6px;
    display: block;
}

.bd-blue { top: 0; height: 16px; background-color: #6f87b8; border-radius: 0 0 0 6px; }
.bd-line1 { top: 72px; height: 2px; background-color: #333; }
.bd-line2 { top: 100px; height: 2px; background-color: #333; }
.bd-red { top: 74px; height: 26px; background-color: #e2c6c0; }
.bd-e { top: 128px; height: 12px; background-color: #555; }
.bd-band { top: 160px; height: 68px; background-color: #bdbdbd; }
.bd-blue2 { top: 325px; height: 11px; background-color: #7f9ac0; }
.bd-s { top: 386px; height: 28px; background-color: #666; }
.bd-band2 { top: 622px; height: 48px; background-color: #c4c4c4; }
.bd-n { top: 840px; height: 26px; background-color: #777; }
.bd-k1 { top: 992px; height: 2px; background-color: #222; }
.bd-k2 { top: 1050px; height: 3px; background-color: #222; }
.bd-f { top: 1310px; height: 30px; background-color: #222; }
```
